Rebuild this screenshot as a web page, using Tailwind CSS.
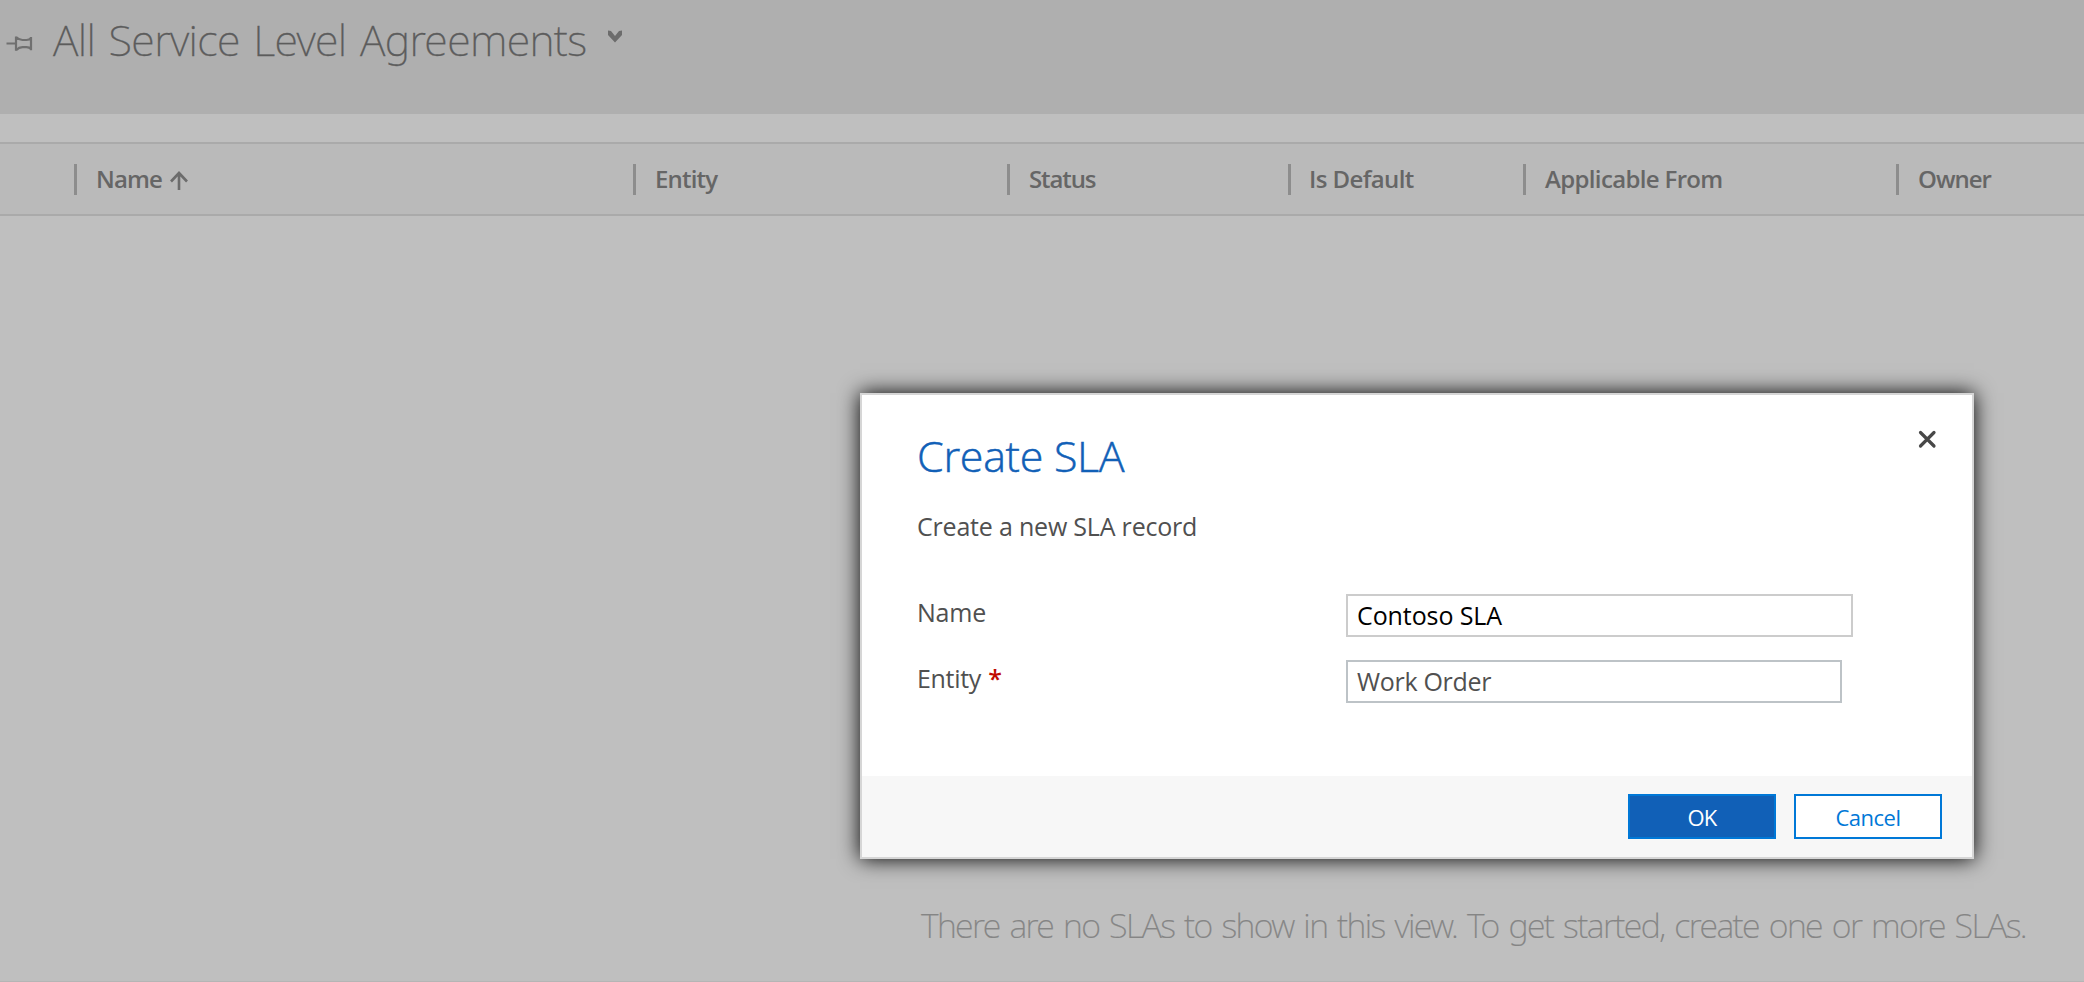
<!DOCTYPE html>
<html lang="en">
<head>
<meta charset="utf-8">
<title>All Service Level Agreements</title>
<script src="https://cdn.jsdelivr.net/npm/@tailwindcss/browser@4"></script>
</head>
<body class="relative flex h-[982px] w-[2084px] flex-col overflow-hidden bg-[#bfbfbf] font-['Open_Sans',sans-serif]">
  <header class="flex h-[114px] shrink-0 items-start bg-[#afafaf]">
    <svg class="mt-[34px] ml-[5px] h-5 w-[30px]" viewBox="0 0 30 20" fill="none" stroke="#707070" stroke-width="2.200">
      <path d="M1.5 9.5H11M11 2.5v14.2M11 3q3 3 6.500 3h4q3 0 4.500-2M11 16.200q3-3 6.500-3h4q3 0 4.500 2M26 3v13.200"/>
    </svg>
    <h1 class="mt-[10px] ml-[18px] w-[534px] font-['Noto_Sans',sans-serif] text-[43px] leading-[60px] font-extralight tracking-[-0.65px] whitespace-nowrap text-[#5c5c5c] [-webkit-text-stroke:0.3px] [word-spacing:3px]">All Service Level Agreements</h1>
    <svg class="mt-[29px] ml-5 h-4 w-4" viewBox="0 0 16 16" fill="#6c6c6c"><path d="M1 1.500 4 2 8 7 12 2 15 1.500V6L8 13.500 1 6z"/></svg>
  </header>

  <div class="mt-7 flex h-[74px] shrink-0 items-center border-y-2 border-[#aaaaaa] bg-[#bababa] pl-[74px] text-2xl font-semibold whitespace-nowrap text-[#666666]">
    <div class="flex w-[559px] items-center"><i class="mr-[19px] h-[31px] w-[3px] bg-[#8d8d8d]"></i><span class="tracking-[-0.9px]">Name</span>
      <svg class="mt-1 ml-2 h-5 w-[18px]" viewBox="0 0 18 20" fill="none" stroke="#6c6c6c" stroke-width="2.600"><path d="M9 19V2M1 10.500 9 2l8 8.500"/></svg>
    </div>
    <div class="flex w-[374px] items-center"><i class="mr-[19px] h-[31px] w-[3px] bg-[#8d8d8d]"></i><span class="tracking-[-0.8px]">Entity</span></div>
    <div class="flex w-[281px] items-center"><i class="mr-[19px] h-[31px] w-[3px] bg-[#8d8d8d]"></i><span class="tracking-[-1.1px]">Status</span></div>
    <div class="flex w-[235px] items-center"><i class="mr-[18px] h-[31px] w-[3px] bg-[#8d8d8d]"></i><span class="tracking-[-0.6px]">Is Default</span></div>
    <div class="flex w-[373px] items-center"><i class="mr-[19px] h-[31px] w-[3px] bg-[#8d8d8d]"></i><span class="tracking-[-0.65px]">Applicable From</span></div>
    <div class="flex items-center"><i class="mr-[19px] h-[31px] w-[3px] bg-[#8d8d8d]"></i><span class="tracking-[-1px]">Owner</span></div>
  </div>

  <main class="flex grow flex-col justify-end border-b border-[#b5b5b5] pb-8 pl-[921px]">
    <p class="font-['Noto_Sans',sans-serif] text-[34px] leading-[48px] font-extralight tracking-[-1.6px] whitespace-nowrap text-[#858585] [-webkit-text-stroke:0.2px] [word-spacing:2.5px]">There are no SLAs to show in this view. To get started, create one or more SLAs.</p>
  </main>

  <section role="dialog" class="absolute top-[393px] left-[860px] flex h-[466px] w-[1114px] flex-col border-2 border-[#d6d6d6] bg-white text-[25px] text-[#505050] shadow-[0_0_20px_#000000]">
    <button aria-label="Close" class="absolute top-[34px] right-[35px]">
      <svg class="h-5 w-5" viewBox="0 0 20 20" stroke="#484848" stroke-width="3.200" stroke-linecap="round"><path d="M3.500 3.500 17 17M17 3.500 3.500 17"/></svg>
    </button>
    <div class="grow pt-9 pl-[55px]">
      <h2 class="text-[43px] leading-[50px] font-light tracking-[-0.3px] text-[#1160b7] [-webkit-text-stroke:0.5px]">Create SLA</h2>
      <p class="mt-[29px] leading-8 tracking-[-0.2px]">Create a new SLA record</p>
      <div class="mt-[52px] flex items-center">
        <label class="w-[429px] pb-1.5 tracking-[-0.2px]">Name</label>
        <div class="flex h-[43px] w-[507px] items-center border-2 border-[#cccccc] pl-[9px] tracking-[-0.1px] text-black">Contoso SLA</div>
      </div>
      <div class="mt-[22px] flex items-center">
        <label class="w-[429px] pb-1.5 tracking-[-0.3px]">Entity <span class="ml-px font-semibold text-[#c00b00]">*</span></label>
        <div class="flex h-[43px] w-[496px] items-center border-2 border-[#bdc3c7] pl-[9px] tracking-[-0.3px]">Work Order</div>
      </div>
    </div>
    <footer class="flex h-[81px] items-center justify-end gap-[18px] bg-[#f7f7f7] pr-[30px] text-[22px]">
      <button class="h-[45px] w-[148px] border-2 border-[#0078d7] bg-[#1160b7] pt-px tracking-[-0.8px] text-white">OK</button>
      <button class="h-[45px] w-[148px] border-2 border-[#0078d7] bg-white pt-px tracking-[-0.5px] text-[#0078d7]">Cancel</button>
    </footer>
  </section>
</body>
</html>
